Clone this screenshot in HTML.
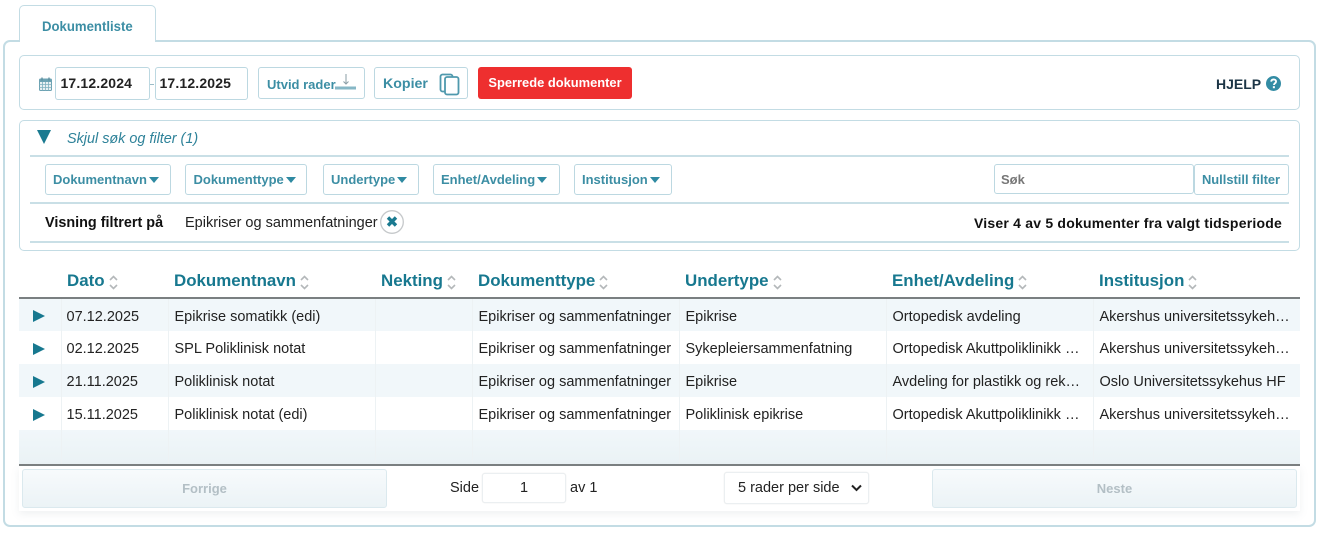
<!DOCTYPE html>
<html lang="no"><head><meta charset="utf-8"><title>Dokumentliste</title>
<style>
*{box-sizing:border-box}
html,body{margin:0;padding:0;background:#fff}
body{width:1322px;height:533px;overflow:hidden;font-family:"Liberation Sans",sans-serif;color:#222}
#w{position:relative;width:1322px;height:533px;filter:blur(.3px)}
.a{position:absolute}
.box{position:absolute;border:1.5px solid #c3dce4;border-radius:5px;background:#fff}
.t{position:absolute;white-space:nowrap;line-height:20px;height:20px}
.btn{position:absolute;border:1.5px solid #bcd8e1;border-radius:3px;background:#fff;color:#3c8ea4;font-weight:bold;font-size:13px;white-space:nowrap}
.fb{top:164px;height:31px;line-height:29px;padding-left:7px}
.fb i{display:inline-block;width:0;height:0;border:5.500px solid transparent;border-top:6.500px solid #2f8aa2;border-bottom:0;margin-left:2px;vertical-align:1px}
.ln{position:absolute;left:30px;width:1259px;height:2px;background:#c9dfe6}
table{position:absolute;left:19px;top:265px;width:1281px;border-collapse:collapse;table-layout:fixed;font-size:14.5px}
th{height:33px;text-align:left;padding:0 0 0 6px;color:#17788f;font-size:16.900px;white-space:nowrap;font-weight:bold;border-bottom:2px solid #7a7f81}
th svg{margin-left:4px;vertical-align:-4px}
td{height:33px;padding:3px 0 0 6px;white-space:nowrap;overflow:hidden;border-left:1px solid #edf2f4}
td:first-child{border-left:0;padding:2px 0 0 14px}
td:nth-child(2){padding-left:5px}
tr.o td{background:#f1f7fa}
tr.e td{background:#fff}
tr.l td{background:linear-gradient(#f1f7fa,#eaf2f5);height:35px;border-bottom:2px solid #7a7f81}
.play{display:block;width:0;height:0;border-left:12px solid #17788f;border-top:6px solid transparent;border-bottom:6px solid transparent}
.pg{position:absolute;top:469px;height:39px;border:1.5px solid #dbe9ee;border-radius:3px;background:linear-gradient(#f7fafc,#ebf3f6);color:#b3bfc5;font-weight:bold;font-size:13px;text-align:center;line-height:37px}
.inp{position:absolute;background:#fff;border:1.5px solid #ebeff1;border-radius:3px;box-shadow:0 0 1px #ddd}
</style></head><body><div id="w">

<div class="box" style="left:3px;top:40px;width:1313px;height:487px;border-width:2px;border-radius:7px"></div>
<div class="a" style="left:19px;top:5px;width:137px;height:37px;background:#fff;border:1.5px solid #c3dce4;border-bottom:0;border-radius:5px 5px 0 0"></div>
<div class="t" style="left:42px;top:16px;font-weight:bold;font-size:14px;color:#3c8ea4;transform:scaleX(.94);transform-origin:0 0">Dokumentliste</div>

<!-- toolbar -->
<div class="box" style="left:19px;top:55px;width:1281px;height:55px"></div>
<svg class="a" style="left:39px;top:77px" width="13" height="14" viewBox="0 0 13 14"><rect x=".5" y="2" width="12" height="11.5" rx="1" fill="#e9f0f2" stroke="#6da3b3"/><rect x=".5" y="2" width="12" height="3" fill="#6da3b3"/><path d="M3 .5v3M10 .5v3" stroke="#5b8e9e" stroke-width="1.3"/><path d="M.5 7.5h12M.5 10.5h12M3.5 5v8.500M6.500 5v8.500M9.500 5v8.500" stroke="#7fb0bf" stroke-width=".8"/></svg>
<div class="a" style="left:55px;top:67px;width:95px;height:33px;border:1.5px solid #bcd8e1;border-radius:3px"></div>
<div class="t" style="left:60.500px;top:73px;font-weight:bold;font-size:14px;letter-spacing:.15px;color:#222">17.12.2024</div>
<div class="a" style="left:150px;top:84px;width:4px;height:1px;background:#9bbcc7"></div>
<div class="a" style="left:155px;top:67px;width:93px;height:33px;border:1.5px solid #bcd8e1;border-radius:3px"></div>
<div class="t" style="left:159.500px;top:73px;font-weight:bold;font-size:14px;letter-spacing:.15px;color:#222">17.12.2025</div>

<div class="btn" style="left:258px;top:67px;width:107px;height:32px;line-height:33px;padding-left:8px">Utvid rader</div>
<svg class="a" style="left:335px;top:72px" width="22" height="18" viewBox="0 0 22 18"><rect x="0" y="14.500" width="21" height="3" fill="#86b7c6"/><path d="M11 2v10M8.500 9.500L11 12l2.500-2.500" fill="none" stroke="#8a9ea6" stroke-width="1"/></svg>

<div class="btn" style="left:374px;top:67px;width:94px;height:32px;line-height:32.500px;padding-left:8px;font-size:14.200px">Kopier</div>
<svg class="a" style="left:439px;top:72.500px" width="21" height="23" viewBox="0 0 21 23"><path d="M6 18.500H3.500a2 2 0 0 1-2-2V3.500a2 2 0 0 1 2-2h8a2 2 0 0 1 2 2V4" fill="none" stroke="#4f99ad" stroke-width="1.800"/><rect x="6" y="4" width="13.500" height="17.500" rx="2" fill="#fff" stroke="#4f99ad" stroke-width="1.800"/></svg>

<div class="a" style="left:478px;top:67px;width:154px;height:32px;background:#ee2f2f;border-radius:3px;color:#fff;font-weight:bold;font-size:12.900px;text-align:center;line-height:31px;white-space:nowrap">Sperrede dokumenter</div>

<div class="t" style="left:1216px;top:73.500px;font-weight:bold;font-size:14px;color:#1c3546">HJELP</div>
<svg class="a" style="left:1265.500px;top:75.500px" width="15" height="15" viewBox="0 0 14 14"><circle cx="7" cy="7" r="7" fill="#338ca4"/><path d="M4.800 5.300C5 3.800 6 3.200 7.100 3.200c1.300 0 2.300.8 2.300 1.900 0 1.700-2 1.600-2 3.300" fill="none" stroke="#fff" stroke-width="1.700"/><rect x="6.400" y="9.500" width="1.900" height="1.900" fill="#fff"/></svg>

<!-- filter -->
<div class="box" style="left:19px;top:120px;width:1281px;height:131px"></div>
<div class="a" style="left:37px;top:130px;width:0;height:0;border-left:7.500px solid transparent;border-right:7.500px solid transparent;border-top:14px solid #1a7a90"></div>
<div class="t" style="left:67px;top:129px;font-style:italic;font-size:14.400px;color:#2e8299">Skjul søk og filter (1)</div>
<div class="ln" style="top:155px"></div>
<div class="ln" style="top:202px"></div>
<div class="ln" style="top:241px"></div>

<div class="btn fb" style="left:45px;width:126px">Dokumentnavn<i></i></div>
<div class="btn fb" style="left:185px;width:122px;padding-left:7.500px">Dokumenttype<i></i></div>
<div class="btn fb" style="left:323px;width:96px">Undertype<i></i></div>
<div class="btn fb" style="left:433px;width:127px">Enhet/Avdeling<i></i></div>
<div class="btn fb" style="left:574px;width:98px">Institusjon<i></i></div>

<div class="a" style="left:994px;top:164px;width:200px;height:30px;border:1.5px solid #bcd8e1;border-radius:3px;padding-left:6px;font-weight:bold;font-size:13px;line-height:29px;color:#777">Søk</div>
<div class="btn" style="left:1194px;top:164px;width:95px;height:31px;line-height:29px;padding-left:7px;font-size:12.900px">Nullstill filter</div>

<div class="t" style="left:45px;top:213px;font-weight:bold;font-size:14.400px;color:#111">Visning filtrert på</div>
<div class="t" style="left:185px;top:212.500px;font-size:14.500px;color:#222">Epikriser og sammenfatninger</div>
<svg class="a" style="left:380px;top:210px" width="24" height="24" viewBox="0 0 24 24"><circle cx="12" cy="12" r="11.300" fill="#fff" stroke="#c6c9cb" stroke-width="1.300"/><path d="M8 7.500l8 8M16 7.500l-8 8" stroke="#1a7a90" stroke-width="3.400"/></svg>
<div class="t" style="left:974px;top:213px;font-weight:bold;font-size:14px;color:#111;letter-spacing:.21px">Viser 4 av 5 dokumenter fra valgt tidsperiode</div>

<!-- table -->
<table>
<colgroup><col style="width:42px"><col style="width:107px"><col style="width:207px"><col style="width:97px"><col style="width:207px"><col style="width:207px"><col style="width:207px"><col style="width:207px"></colgroup>
<thead><tr><th></th>
<th>Dato<svg width="9" height="15" viewBox="0 0 9 15"><path d="M1 5l3.500-3.500L8 5M1 10l3.500 3.500L8 10" fill="none" stroke="#b4b8ba" stroke-width="1.600"/></svg></th>
<th>Dokumentnavn<svg width="9" height="15" viewBox="0 0 9 15"><path d="M1 5l3.500-3.500L8 5M1 10l3.500 3.500L8 10" fill="none" stroke="#b4b8ba" stroke-width="1.600"/></svg></th>
<th>Nekting<svg width="9" height="15" viewBox="0 0 9 15"><path d="M1 5l3.500-3.500L8 5M1 10l3.500 3.500L8 10" fill="none" stroke="#b4b8ba" stroke-width="1.600"/></svg></th>
<th>Dokumenttype<svg width="9" height="15" viewBox="0 0 9 15"><path d="M1 5l3.500-3.500L8 5M1 10l3.500 3.500L8 10" fill="none" stroke="#b4b8ba" stroke-width="1.600"/></svg></th>
<th>Undertype<svg width="9" height="15" viewBox="0 0 9 15"><path d="M1 5l3.500-3.500L8 5M1 10l3.500 3.500L8 10" fill="none" stroke="#b4b8ba" stroke-width="1.600"/></svg></th>
<th>Enhet/Avdeling<svg width="9" height="15" viewBox="0 0 9 15"><path d="M1 5l3.500-3.500L8 5M1 10l3.500 3.500L8 10" fill="none" stroke="#b4b8ba" stroke-width="1.600"/></svg></th>
<th>Institusjon<svg width="9" height="15" viewBox="0 0 9 15"><path d="M1 5l3.500-3.500L8 5M1 10l3.500 3.500L8 10" fill="none" stroke="#b4b8ba" stroke-width="1.600"/></svg></th>
</tr></thead>
<tbody>
<tr class="o"><td><span class="play"></span></td><td>07.12.2025</td><td>Epikrise somatikk (edi)</td><td></td><td>Epikriser og sammenfatninger</td><td>Epikrise</td><td>Ortopedisk avdeling</td><td>Akershus universitetssykeh…</td></tr>
<tr class="e"><td><span class="play"></span></td><td>02.12.2025</td><td>SPL Poliklinisk notat</td><td></td><td>Epikriser og sammenfatninger</td><td>Sykepleiersammenfatning</td><td>Ortopedisk Akuttpoliklinikk …</td><td>Akershus universitetssykeh…</td></tr>
<tr class="o"><td><span class="play"></span></td><td>21.11.2025</td><td>Poliklinisk notat</td><td></td><td>Epikriser og sammenfatninger</td><td>Epikrise</td><td>Avdeling for plastikk og rek…</td><td>Oslo Universitetssykehus HF</td></tr>
<tr class="e"><td><span class="play"></span></td><td>15.11.2025</td><td>Poliklinisk notat (edi)</td><td></td><td>Epikriser og sammenfatninger</td><td>Poliklinisk epikrise</td><td>Ortopedisk Akuttpoliklinikk …</td><td>Akershus universitetssykeh…</td></tr>
<tr class="l"><td></td><td></td><td></td><td></td><td></td><td></td><td></td><td></td></tr>
</tbody></table>

<!-- pager -->
<div class="a" style="left:19px;top:466px;width:1281px;height:45px;background:#fff;box-shadow:0 3px 8px rgba(120,140,150,.12)"></div>
<div class="pg" style="left:22px;width:365px">Forrige</div>
<div class="t" style="left:450px;top:478px;font-size:14.500px">Side</div>
<div class="inp" style="left:482px;top:473px;width:84px;height:30px;text-align:center;font-size:14.500px;line-height:28px">1</div>
<div class="t" style="left:570px;top:478px;font-size:14.500px">av 1</div>
<div class="inp" style="left:724px;top:472px;width:145px;height:32px;padding-left:13px;font-size:14.500px;line-height:31px">5 rader per side</div>
<svg class="a" style="left:851px;top:484px" width="11" height="8" viewBox="0 0 11 8"><path d="M1 1.500l4.500 4.500L10 1.500" fill="none" stroke="#222" stroke-width="2"/></svg>
<div class="pg" style="left:932px;width:365px">Neste</div>

</div></body></html>
